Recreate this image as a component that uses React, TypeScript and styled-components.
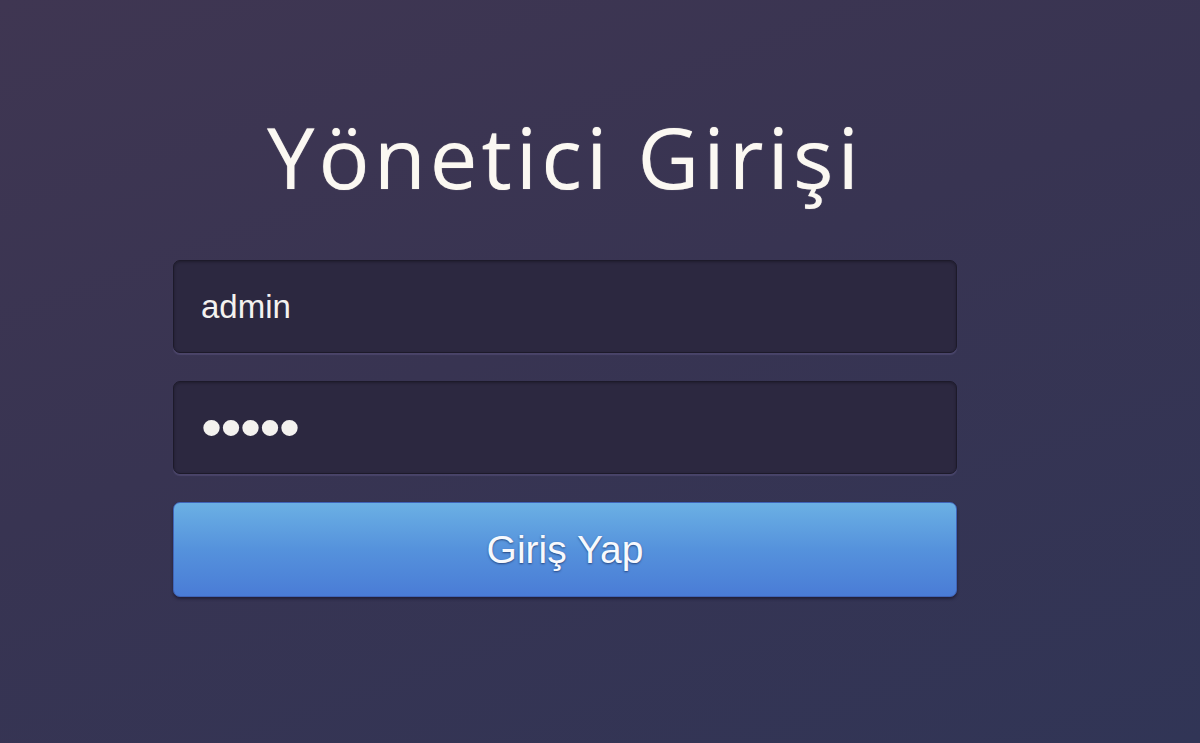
import styled, { createGlobalStyle } from 'styled-components';

const GlobalStyle = createGlobalStyle`
  html, body {
    margin: 0;
    padding: 0;
    height: 100%;
  }
  #root {
    min-height: 100vh;
  }
`;

export default function App() {
  return (
    <>
      <GlobalStyle />
      <LoginPage>
        <LoginForm onSubmit={(e) => e.preventDefault()}>
          <Title>Yönetici Girişi</Title>
          <Field type="text" defaultValue="admin" />
          <Field type="password" defaultValue="admin" $masked />
          <SubmitButton type="submit">Giriş Yap</SubmitButton>
        </LoginForm>
      </LoginPage>
    </>
  );
}

const LoginPage = styled.div`
  min-height: 100vh;
  box-sizing: border-box;
  padding: 114px 0 0 173px;
  background: linear-gradient(160deg, #3f3652 0%, #383452 45%, #313556 100%);
`;

const LoginForm = styled.form`
  width: 784px;
  display: flex;
  flex-direction: column;
  row-gap: 28px;
`;

const Title = styled.h1`
  margin: 0 0 33px;
  text-align: center;
  font-family: 'Open Sans', 'Noto Sans', sans-serif;
  font-weight: 400;
  font-size: 85px;
  line-height: 1;
  letter-spacing: 4px;
  color: #fbf8f2;
  text-shadow: 0 0 1px rgba(251, 248, 242, 0.6);
`;

const Field = styled.input<{ $masked?: boolean }>`
  box-sizing: border-box;
  height: 93px;
  padding: 0 27px;
  border: 1px solid #1d1a2a;
  border-radius: 7px;
  background: #2c2840;
  box-shadow: inset 0 1px 3px rgba(0, 0, 0, 0.3), 0 2px 1px rgba(110, 100, 150, 0.35);
  font-family: 'Liberation Sans', Arial, sans-serif;
  font-size: ${(p) => (p.$masked ? '60px' : '33px')};
  letter-spacing: ${(p) => (p.$masked ? '-1.5px' : 'normal')};
  color: #f4f2ef;
  outline: none;
`;

const SubmitButton = styled.button`
  height: 95px;
  border: 1px solid #3f64b8;
  border-radius: 7px;
  background: linear-gradient(to bottom, #6bb0e4 0%, #5592dc 50%, #4a7cd6 100%);
  box-shadow: 0 2px 3px rgba(20, 16, 36, 0.6);
  font-family: 'Liberation Sans', Arial, sans-serif;
  font-size: 39px;
  color: #f7f9fd;
  text-shadow: 0 1px 2px rgba(20, 40, 90, 0.7);
  cursor: pointer;
`;
